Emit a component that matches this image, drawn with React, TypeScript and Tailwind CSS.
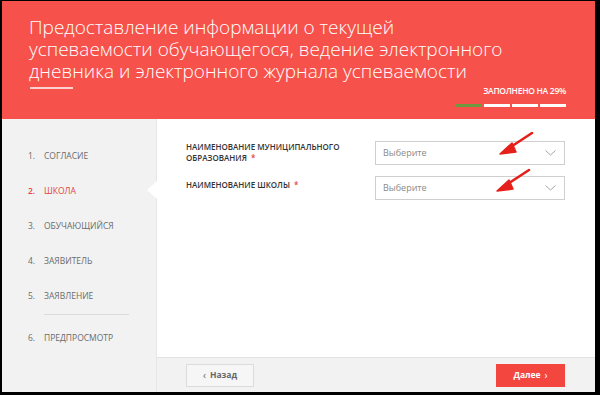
import React from "react";

const steps = [
  { n: "1.", label: "СОГЛАСИЕ" },
  { n: "2.", label: "ШКОЛА", active: true },
  { n: "3.", label: "ОБУЧАЮЩИЙСЯ" },
  { n: "4.", label: "ЗАЯВИТЕЛЬ" },
  { n: "5.", label: "ЗАЯВЛЕНИЕ" },
];

function Chevron() {
  return (
    <svg width="11" height="6" viewBox="0 0 11 6" fill="none">
      <path d="M0.5 0.5 L5.5 5 L10.5 0.5" stroke="#9a9a9a" strokeWidth="0.9" />
    </svg>
  );
}

function Arrow({ className }: { className: string }) {
  return (
    <svg className={className} width="40" height="26" viewBox="0 0 40 26" fill="none">
      <path d="M34 2 L8 19" stroke="#e5201b" strokeWidth="2.6" strokeLinecap="round" />
      <path d="M2 23 L14 12 L18 21 Z" fill="#e5201b" stroke="#e5201b" strokeWidth="1.5" strokeLinejoin="round" />
    </svg>
  );
}

function Select() {
  return (
    <div className="w-[190px] h-[24px] border border-[#cfcfcf] bg-white flex items-center justify-between pl-[7px] pr-[8px]">
      <span className="text-[9px] text-[#8a8a8a]">Выберите</span>
      <Chevron />
    </div>
  );
}

export default function App() {
  return (
    <div
      className="w-[600px] h-[395px] bg-black pt-[1px] pl-[2px] pr-[5px] pb-[3px] overflow-hidden"
      style={{ fontFamily: "'Open Sans', 'Noto Sans', sans-serif" }}
    >
      <div className="w-full h-full flex flex-col">
        <header className="h-[118px] bg-[#f6514a] relative pl-[27px] pt-[15px]">
          <h1 className="text-white font-light text-[19px] leading-[22px]">
            Предоставление информации о текущей
            <br />
            успеваемости обучающегося, ведение электронного
            <br />
            дневника и электронного журнала успеваемости
          </h1>
          <div className="w-[43px] h-[2px] bg-[#fbd2cf] mt-[5px] ml-[1px]" />
          <div className="absolute right-[29px] top-[84px] flex flex-col items-end">
            <span className="text-white text-[8.5px] font-semibold tracking-[-0.3px]">ЗАПОЛНЕНО НА 29%</span>
            <div className="flex gap-[2px] mt-[6px]">
              <div className="w-[26px] h-[3px] bg-[#6c9a3c]" />
              <div className="w-[26px] h-[3px] bg-white" />
              <div className="w-[26px] h-[3px] bg-white" />
              <div className="w-[26px] h-[3px] bg-white" />
            </div>
          </div>
        </header>

        <div className="flex flex-1">
          <aside className="w-[155px] bg-[#f2f2f2] border-r border-[#e6e6e6] pt-[31px] text-[8.5px] text-[#6b6b6b]">
            {steps.map((s) => (
              <div key={s.n} className="relative h-[35px] flex items-start pl-[26px]">
                <span className={`w-[16px] ${s.active ? "text-[#e4463e] font-semibold" : ""}`}>{s.n}</span>
                <span className={s.active ? "text-[#e4463e]" : ""}>{s.label}</span>
                {s.active && (
                  <div className="absolute right-[-1px] top-[-4px] w-0 h-0 border-y-[9px] border-y-transparent border-r-[10px] border-r-white" />
                )}
              </div>
            ))}
            <div className="ml-[42px] w-[85px] h-px bg-[#dcdcdc] mt-[-11px]" />
            <div className="flex pl-[26px] mt-[17px]">
              <span className="w-[16px]">6.</span>
              <span>ПРЕДПРОСМОТР</span>
            </div>
          </aside>

          <main className="flex-1 flex flex-col bg-white">
            <div className="flex-1 relative pl-[29px] pr-[30px] pt-[22px]">
              <div className="flex justify-between items-start">
                <div className="text-[8px] leading-[11px] text-[#333] font-semibold">
                  НАИМЕНОВАНИЕ МУНИЦИПАЛЬНОГО
                  <br />
                  ОБРАЗОВАНИЯ <span className="text-[#e4463e] ml-[2px]">*</span>
                </div>
                <Select />
              </div>
              <div className="flex justify-between items-start mt-[11px]">
                <div className="text-[8px] leading-[11px] text-[#333] font-semibold pt-[3px]">
                  НАИМЕНОВАНИЕ ШКОЛЫ <span className="text-[#e4463e] ml-[2px]">*</span>
                </div>
                <Select />
              </div>
              <Arrow className="absolute left-[341px] top-[12px]" />
              <Arrow className="absolute left-[338px] top-[49px]" />
            </div>
            <footer className="h-[35px] bg-[#f2f2f2] border-t border-[#e3e3e3] flex items-center justify-between pl-[29px] pr-[30px]">
              <button className="w-[68px] h-[23px] bg-[#f6f6f6] border border-[#dcdcdc] text-[8.5px] font-bold text-[#666] flex items-center justify-center gap-[4px]">
                <span className="text-[10px] font-normal">‹</span>Назад
              </button>
              <button className="w-[69px] h-[23px] bg-[#f3463f] text-[8.5px] font-bold text-white flex items-center justify-center gap-[4px]">
                Далее<span className="text-[10px] font-normal">›</span>
              </button>
            </footer>
          </main>
        </div>
      </div>
    </div>
  );
}
